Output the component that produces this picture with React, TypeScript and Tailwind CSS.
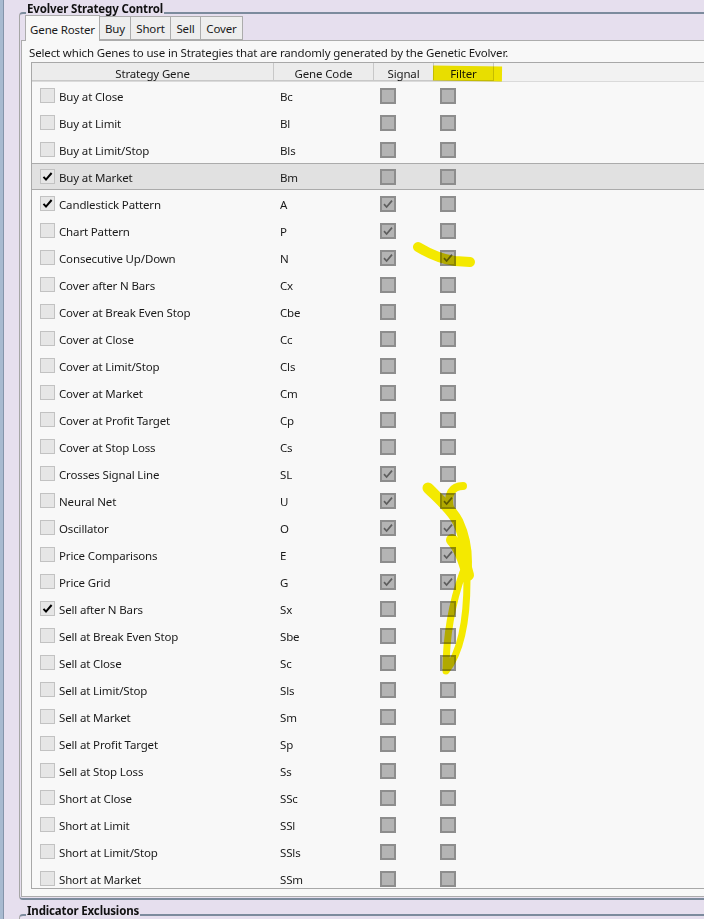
import React from "react";

type Gene = [string, string, boolean, boolean, boolean];

// name, code, enabled, signal, filter
const genes: Gene[] = [
  ["Buy at Close", "Bc", false, false, false],
  ["Buy at Limit", "Bl", false, false, false],
  ["Buy at Limit/Stop", "Bls", false, false, false],
  ["Buy at Market", "Bm", true, false, false],
  ["Candlestick Pattern", "A", true, true, false],
  ["Chart Pattern", "P", false, true, false],
  ["Consecutive Up/Down", "N", false, true, true],
  ["Cover after N Bars", "Cx", false, false, false],
  ["Cover at Break Even Stop", "Cbe", false, false, false],
  ["Cover at Close", "Cc", false, false, false],
  ["Cover at Limit/Stop", "Cls", false, false, false],
  ["Cover at Market", "Cm", false, false, false],
  ["Cover at Profit Target", "Cp", false, false, false],
  ["Cover at Stop Loss", "Cs", false, false, false],
  ["Crosses Signal Line", "SL", false, true, false],
  ["Neural Net", "U", false, true, true],
  ["Oscillator", "O", false, true, true],
  ["Price Comparisons", "E", false, false, true],
  ["Price Grid", "G", false, true, true],
  ["Sell after N Bars", "Sx", true, false, false],
  ["Sell at Break Even Stop", "Sbe", false, false, false],
  ["Sell at Close", "Sc", false, false, false],
  ["Sell at Limit/Stop", "Sls", false, false, false],
  ["Sell at Market", "Sm", false, false, false],
  ["Sell at Profit Target", "Sp", false, false, false],
  ["Sell at Stop Loss", "Ss", false, false, false],
  ["Short at Close", "SSc", false, false, false],
  ["Short at Limit", "SSl", false, false, false],
  ["Short at Limit/Stop", "SSls", false, false, false],
  ["Short at Market", "SSm", false, false, false],
];

const SELECTED = 3;

function CheckBox({ checked }: { checked: boolean }) {
  return (
    <div className="w-[15px] h-[15px] shrink-0 bg-[#e6e6e6] border border-[#c2c2c2] flex items-center justify-center">
      {checked && (
        <svg width="13" height="13" viewBox="0 0 13 13">
          <path d="M2.5 6.8 L5 9.6 L10.6 3" fill="none" stroke="#000" strokeWidth="2" />
        </svg>
      )}
    </div>
  );
}

function GreyBox({ checked }: { checked: boolean }) {
  return (
    <div className="w-[16px] h-[16px] shrink-0 bg-[#b4b4b4] border-2 border-[#8d8d8d] flex items-center justify-center">
      {checked && (
        <svg width="12" height="12" viewBox="0 0 12 12">
          <path d="M2 6.2 L4.6 9 L10 2.6" fill="none" stroke="#5e5e5e" strokeWidth="1.7" />
        </svg>
      )}
    </div>
  );
}

function GroupBox({ title, className, children }: { title: string; className: string; children?: React.ReactNode }) {
  return (
    <div
      className={
        "relative shrink-0 -mr-[40px] border-t-2 border-b-2 border-l border-[#7c8b9d] border-l-[#a6a6a6] rounded-l-[4px] " +
        className
      }
    >
      <span className="absolute -top-[13px] left-[6px] px-px bg-[#e6dfee] font-bold leading-[16px] text-[11.5px] text-[#111]">
        {title}
      </span>
      {children}
    </div>
  );
}

const tabs = [
  { label: "Buy", w: "w-[31px]" },
  { label: "Short", w: "w-[40px]" },
  { label: "Sell", w: "w-[30px]" },
  { label: "Cover", w: "w-[42px]" },
];

function Highlights() {
  return (
    <svg
      className="absolute left-0 top-0 pointer-events-none mix-blend-multiply"
      width="704"
      height="919"
      viewBox="0 0 704 919"
    >
      <g fill="none" stroke="#fbf000" strokeLinecap="round" strokeLinejoin="round">
        <path d="M433 73 L502 74" strokeWidth="15" strokeLinecap="butt" />
        <path d="M418 247 C428 253, 440 259, 455 261 L470 262" strokeWidth="10" />
        <path d="M428 488 C440 500, 452 510, 458 522 C464 535, 468 550, 466 572" strokeWidth="11" />
        <path d="M463 486 C452 486, 447 494, 450 508" strokeWidth="8" />
        <path d="M463 572 C453 600, 446 630, 446 671 C458 656, 467 630, 467 580" strokeWidth="7" />
        <path d="M452 540 C460 548, 464 560, 468 575" strokeWidth="12" />
      </g>
    </svg>
  );
}

export default function App() {
  return (
    <div className="relative w-[704px] h-[919px] overflow-hidden bg-[#e6dfee] flex font-['Noto_Sans',sans-serif] text-[11.5px] tracking-[-0.15px] text-[#1a1a1a]">
      <div className="w-[3px] shrink-0 bg-[#a8bad0]" />
      <div className="w-px shrink-0 bg-[#8494aa]" />
      <div className="flex-1 min-w-0 pl-[15px] flex flex-col">
        <GroupBox title="Evolver Strategy Control" className="mt-[12px] h-[888px] pl-px pt-[2px] pb-px flex flex-col">
          {/* tabs */}
          <div className="h-[25px] shrink-0 flex items-end pl-[4px] -mb-px relative z-10">
            <div className="w-[75px] h-[26px] pt-[2px] bg-[#f8f8f8] border border-b-0 border-[#acacac] flex items-center justify-center leading-[16px]">
              Gene Roster
            </div>
            {tabs.map((t) => (
              <div
                key={t.label}
                className={t.w + " h-[24px] mb-px pt-[2px] bg-[#eeeeee] border border-l-0 border-[#acacac] flex items-center justify-center leading-[16px]"}
              >
                {t.label}
              </div>
            ))}
          </div>
          {/* panel */}
          <div className="flex-1 min-h-0 bg-[#f8f8f8] border-t border-l border-b border-[#acacac] pl-[6px] pt-[4px] flex flex-col">
            <p className="leading-[16px] pl-px">
              Select which Genes to use in Strategies that are randomly generated by the Genetic Evolver.
            </p>
            <div className="ml-[3px] mt-px h-[827px] shrink-0 border-t border-l border-b border-[#a8a8a8] overflow-hidden">
              <div className="flex h-[19px] bg-[#f2f2f2] border-b border-[#dadada]">
                <div className="w-[242px] shrink-0 bg-[#ececec] border-r border-b border-[#c8c8c8] text-center leading-[18px] pt-[2px]">Strategy Gene</div>
                <div className="w-[100px] shrink-0 bg-[#ececec] border-r border-b border-[#c8c8c8] text-center leading-[18px] pt-[2px]">Gene Code</div>
                <div className="w-[60px] shrink-0 bg-[#ececec] border-r border-b border-[#c8c8c8] text-center leading-[18px] pt-[2px]">Signal</div>
                <div className="w-[60px] shrink-0 bg-[#ececec] border-r border-b border-[#c8c8c8] text-center leading-[18px] pt-[2px]">Filter</div>
              </div>
              {genes.map(([name, code, on, sig, fil], i) => (
                <div
                  key={code}
                  className={
                    "flex h-[27px] items-center " +
                    (i === SELECTED ? "bg-[#e1e1e1] border-y border-[#ababab]" : "")
                  }
                >
                  <div className="w-[242px] shrink-0 pl-[8px] flex items-center gap-[4px]">
                    <CheckBox checked={on} />
                    <span className="leading-[16px] pt-[2px]">{name}</span>
                  </div>
                  <div className="w-[100px] shrink-0 pl-[6px] leading-[16px] pt-[2px]">{code}</div>
                  <div className="w-[60px] shrink-0 pl-[6px]">
                    <GreyBox checked={sig} />
                  </div>
                  <div className="w-[60px] shrink-0 pl-[6px]">
                    <GreyBox checked={fil} />
                  </div>
                </div>
              ))}
            </div>
          </div>
        </GroupBox>
        <GroupBox title="Indicator Exclusions" className="mt-[14px] h-[60px]" />
      </div>
      <Highlights />
    </div>
  );
}
